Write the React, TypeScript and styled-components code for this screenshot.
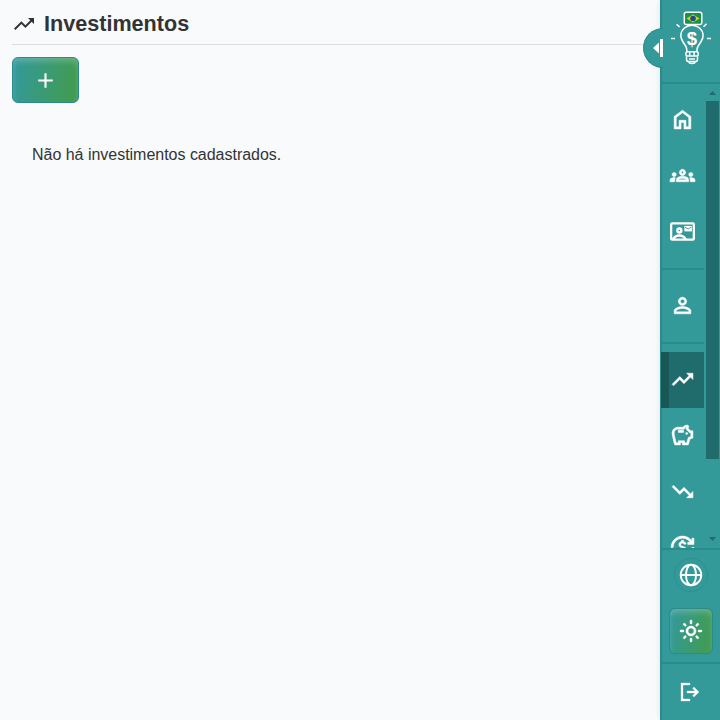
import React from 'react';
import styled, { createGlobalStyle, css } from 'styled-components';
import {
  MdAdd, MdCurrencyExchange, MdOutlineGroups, MdOutlineLightMode,
  MdOutlineSavings, MdPersonOutline, MdTrendingDown, MdTrendingUp,
} from 'react-icons/md';

const teal = '#339999';
const line = '#2b8a8a';

const GlobalStyle = createGlobalStyle`
  * { box-sizing: border-box; }
  body { margin: 0; background: #f8fafc; color: #333; font-family: "Liberation Sans", Arial, sans-serif; overflow: hidden; }
  svg { display: block; flex-shrink: 0; }
`;

const Layout = styled.div`
  display: flex;
  width: 720px;
  height: 720px;
`;

const Main = styled.main`
  flex: 1;
  padding: 0 0 0 12px;
`;

const PageHeader = styled.header`
  display: flex;
  align-items: center;
  gap: 8px;
  height: 45px;
  padding: 3px 0 0;
  border-bottom: 1px solid #dcdfe2;

  svg { margin-top: 1px; }
`;

const Title = styled.h1`
  margin: 0;
  font-size: 21.6px;
  line-height: 28px;
`;

const gradientButton = css`
  display: flex;
  align-items: center;
  justify-content: center;
  padding: 0;
  color: #fff;
  border: 1px solid ${line};
  border-radius: 6px;
  background: linear-gradient(100deg, #339999 5%, #409c53 90%);
  box-shadow: inset 0 4px 6px -1px rgba(255, 255, 255, 0.24);
`;

const AddButton = styled.button`
  ${gradientButton}
  width: 67px;
  height: 46px;
  margin-top: 12px;
`;

const EmptyMessage = styled.p`
  margin: 42px 0 0 20px;
  font-size: 16px;
  letter-spacing: -0.02px;
  line-height: 20px;
`;

const Sidebar = styled.aside`
  position: relative;
  display: flex;
  flex-direction: column;
  width: 60px;
  color: #fff;
  background: ${teal};
  border-left: 2px solid ${line};
  box-shadow: 0 0 6px rgba(0, 0, 0, 0.1);
`;

const CollapseTab = styled.button`
  position: absolute;
  left: -19px;
  top: 28px;
  display: flex;
  align-items: center;
  width: 20px;
  height: 40px;
  padding: 0 0 0 9px;
  border: 1px solid ${line};
  border-right: 0;
  border-radius: 20px 0 0 20px;
  background: ${teal};
`;

const Brand = styled.div`
  height: 84px;
  padding: 10px 0 0 7px;
  border-bottom: 2px solid ${line};
`;

const ScrollArea = styled.div`
  display: flex;
  height: 464px;
`;

const Nav = styled.nav`
  width: 43px;
  height: 464px;
  margin-left: -1px;
  padding-top: 8px;
  overflow: hidden;
`;

const NavItem = styled.a<{ $active?: boolean }>`
  display: flex;
  align-items: center;
  justify-content: center;
  height: 56px;
  padding-bottom: 1px;
  background: ${({ $active }) => ($active ? 'linear-gradient(to right, #195656 8px, #206b6b 8px)' : 'none')};

  svg { overflow: visible; }
  svg.glyph { stroke: currentColor; stroke-width: 0.5; }
  svg.glyph path[fill="none"] { stroke: none; }
`;

const Divider = styled.hr`
  height: 2px;
  margin: 8px 0 8px 1px;
  border: 0;
  background: ${line};
`;

const Scrollbar = styled.div`
  display: flex;
  flex-direction: column;
  align-items: center;
  width: 13px;
  margin-left: 2px;
`;

const Arrow = styled.svg`
  margin: 7px 0 6px;
`;

const Thumb = styled.div`
  width: 13px;
  height: 358px;
  margin-bottom: 71px;
  background: #206b6b;
`;

const Tools = styled.div`
  display: flex;
  flex-direction: column;
  align-items: center;
  gap: 16px;
  height: 116px;
  padding-top: 8px;
  border-top: 2px solid ${line};
  border-bottom: 2px solid ${line};
`;

const LanguageButton = styled.button`
  display: flex;
  align-items: center;
  justify-content: center;
  width: 34px;
  height: 34px;
  padding: 0;
  border: 1px solid #2e9090;
  border-radius: 50%;
  background: ${teal};
  color: #fff;
`;

const ThemeButton = styled.button`
  ${gradientButton}
  width: 44px;
  height: 46px;

  svg { stroke: currentColor; stroke-width: 0.5; }
  svg path[fill="none"] { stroke: none; }
`;

const Logout = styled.a`
  display: flex;
  align-items: center;
  justify-content: center;
  height: 56px;
  padding-right: 2px;
`;

const size = 25;

const HomeIcon = () => (
  <svg className="glyph" width={size} height={size} viewBox="0 0 24 24" fill="currentColor">
    <path d="M6 19h2.700v-6.200h6.600V19H18v-9l-6-4.500L6 10zm-2 2V9l8-6 8 6v12h-6.600v-6.200h-2.800V21z" />
  </svg>
);

const ContactIcon = () => (
  <svg width={size} height={size} viewBox="0 0 24 24" fill="none" stroke="currentColor">
    <rect x="1.100" y="4.200" width="21.800" height="15.600" rx="1" strokeWidth="2.200" />
    <circle cx="9" cy="11" r="1.900" strokeWidth="2.300" />
    <path d="M3 19.500c1.200-2.600 3.300-3.700 6-3.700s4.800 1.100 6 3.700" strokeWidth="2.300" />
    <path d="M13.800 6.600h7.200v5.300h-7.200z" fill="currentColor" stroke="none" />
    <path d="m14.400 7.800 3 1.800 3-1.800" stroke={teal} strokeWidth=".9" />
  </svg>
);

const GlobeIcon = () => (
  <svg width="24" height="24" viewBox="0 0 24 24" fill="none" stroke="currentColor" strokeWidth="1.900">
    <circle cx="12" cy="12" r="10.300" />
    <ellipse cx="12" cy="12" rx="5" ry="10.300" />
    <path d="M1.700 12h20.600" />
  </svg>
);

const LogoutIcon = () => (
  <svg width="24" height="24" viewBox="0 0 24 24" fill="currentColor" stroke="currentColor" strokeWidth=".3">
    <path d="M5 5h7V3H3v18h9v-2H5z" />
    <path d="m16 7-1.400 1.450L17.175 11H9v2h8.175l-2.575 2.550L16 17l5-5z" />
  </svg>
);

const Logo = () => (
  <svg width="44" height="56" viewBox="0 0 44 56" fill="none" stroke="#fff" strokeWidth="1.500">
    <rect x="15.300" y="2.300" width="17.500" height="12.200" rx="2" fill="#149447" />
    <path d="m17.500 8.500 6.500-3.900 6.500 3.900-6.500 3.900z" fill="#d9ce32" stroke="none" />
    <circle cx="24" cy="8.500" r="2.800" fill="#234c80" stroke="none" />
    <path d="M17.800 42v-2.500c0-3-1.500-4-3.500-7-2.100-3.200-2.700-4.700-2.500-7.200.4-6 5.400-10 11.100-10s10.900 4 11.200 10c.2 2.500-.5 4.200-2.600 7.200-2 3-3.500 4-3.500 7V42" />
    <rect x="16.900" y="41.700" width="12.300" height="4.300" rx="1.500" />
    <path d="M17.500 46.500v2.700q0 2.400 2.200 2.400h6.600q2.200 0 2.200-2.400v-2.700M20 52c0 2 6 2 6 0M20.700 42v4M25.100 42v4M20 49h6" />
    <path d="M2 28.500h4M38 28.500h4M7.600 14.300l3 2.500M37.500 13.800l-3 3" />
    <text x="23" y="35" textAnchor="middle" fill="#fff" stroke="none" fontFamily="Liberation Sans, Arial, sans-serif" fontWeight="bold" fontSize="18.500">$</text>
  </svg>
);

export default function App() {
  return (
    <>
      <GlobalStyle />
      <Layout>
        <Main>
          <PageHeader>
            <MdTrendingUp size={24} />
            <Title>Investimentos</Title>
          </PageHeader>
          <AddButton aria-label="Adicionar"><MdAdd width={25} height={26} size={25} /></AddButton>
          <EmptyMessage>Não há investimentos cadastrados.</EmptyMessage>
        </Main>
        <Sidebar>
          <CollapseTab aria-label="Recolher menu">
            <svg width="10" height="18" viewBox="0 0 10 18" fill="#fff">
              <path d="M0 9l6-5.500v11zM7 0h3v18H7z" />
            </svg>
          </CollapseTab>
          <Brand><Logo /></Brand>
          <ScrollArea>
            <Nav>
              <NavItem><HomeIcon /></NavItem>
              <NavItem><MdOutlineGroups className="glyph" size={size} /></NavItem>
              <NavItem><ContactIcon /></NavItem>
              <Divider />
              <NavItem><MdPersonOutline className="glyph" size={size} /></NavItem>
              <Divider />
              <NavItem $active><MdTrendingUp className="glyph" size={size} /></NavItem>
              <NavItem><MdOutlineSavings className="glyph" size={size} /></NavItem>
              <NavItem><MdTrendingDown className="glyph" size={size} /></NavItem>
              <NavItem><MdCurrencyExchange className="glyph" size={size} /></NavItem>
            </Nav>
            <Scrollbar>
              <Arrow width="7" height="4" viewBox="0 0 7 4" fill="#206b6b"><path d="M0 4l3.500-4L7 4z" /></Arrow>
              <Thumb />
              <Arrow width="7" height="4" viewBox="0 0 7 4" fill="#206b6b"><path d="M0 0h7L3.500 4z" /></Arrow>
            </Scrollbar>
          </ScrollArea>
          <Tools>
            <LanguageButton aria-label="Idioma"><GlobeIcon /></LanguageButton>
            <ThemeButton aria-label="Tema"><MdOutlineLightMode size={24} /></ThemeButton>
          </Tools>
          <Logout><LogoutIcon /></Logout>
        </Sidebar>
      </Layout>
    </>
  );
}
